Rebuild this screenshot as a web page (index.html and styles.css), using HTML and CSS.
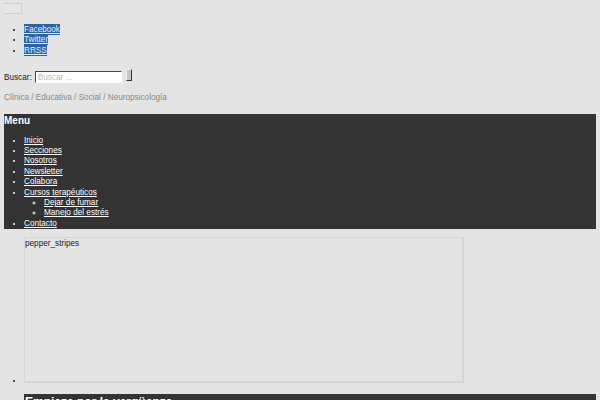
FILE: index.html
```html
<!DOCTYPE html>
<html lang="es">
<head>
<meta charset="utf-8">
<title>Psicología</title>
<link rel="stylesheet" href="styles.css">
</head>
<body>
<button class="toggle" type="button"></button>
<ul class="social">
  <li><a href="#">Facebook</a></li>
  <li><a href="#">Twitter</a></li>
  <li><a href="#">RRSS</a></li>
</ul>
<form class="search">
  <label>Buscar:</label>
  <input class="search-input" type="text" placeholder="Buscar ...">
  <button class="search-btn" type="button"></button>
</form>
<p class="tagline">Clínica / Educativa / Social / Neuropsicología</p>
<nav class="menu">
  <h3 class="menu-title">Menu</h3>
  <ul class="menu-list">
    <li><a href="#">Inicio</a></li>
    <li><a href="#">Secciones</a></li>
    <li><a href="#">Nosotros</a></li>
    <li><a href="#">Newsletter</a></li>
    <li><a href="#">Colabora</a></li>
    <li><a href="#">Cursos terapéuticos</a>
      <ul class="sub">
        <li><a href="#">Dejar de fumar</a></li>
        <li><a href="#">Manejo del estrés</a></li>
      </ul>
    </li>
    <li><a href="#">Contacto</a></li>
  </ul>
</nav>
<ul class="posts">
  <li class="thumb-item"><span class="thumb">pepper_stripes</span></li>
  <li><h2 class="post-title">Empieza por la vergüenza</h2></li>
</ul>
</body>
</html>
```

FILE: styles.css
```css
html { background: #e4e4e4; }
body {
  margin: 3px 4px;
  font-family: "Liberation Sans", Arial, sans-serif;
  font-size: 8.2px;
  line-height: 10.4px;
  color: #222;
  background: #e4e4e4;
}
.toggle {
  display: block;
  width: 19px;
  height: 11px;
  margin-left: -1px;
  padding: 0;
  border: 1px solid #d0d0d0;
  background: #e6e6e6;
}
.social {
  margin: 11px 0 0;
  padding-left: 20px;
  list-style: disc;
}
.social a {
  color: #e8eef6;
  background: #2b62a6;
  text-decoration: underline;
  padding: 1px 0;
}
.search {
  display: flex;
  align-items: flex-start;
  margin: 13px 0 0;
  height: 14px;
}
.search label {
  margin-top: 4px;
  margin-right: 3px;
}
.search-input {
  box-sizing: border-box;
  margin: 2px 0 0;
  width: 87px;
  height: 12px;
  padding: 0 2px;
  border: 1px solid #fff;
  border-top-color: #444;
  border-left-color: #444;
  background: #fff;
  font-family: "Liberation Sans", Arial, sans-serif;
  font-size: 8.2px;
}
.search-input::placeholder { color: #b8b8b8; }
.search-btn {
  box-sizing: border-box;
  margin-left: 4px;
  width: 6px;
  height: 12px;
  padding: 0;
  border: 1px solid #eee;
  border-right-color: #333;
  border-bottom-color: #333;
  background: #c8c8c0;
}
.tagline {
  margin: 10px 0 10px;
  color: #888;
}
.menu {
  background: #333;
  color: #fff;
}
.menu-title {
  margin: 0;
  padding-top: 1px;
  font-size: 10px;
  font-weight: bold;
  line-height: 11px;
}
.menu-list {
  margin: 10px 0 0;
  padding-left: 20px;
}
.menu-list a { color: #fff; text-decoration: underline; }
.menu-list .sub {
  margin: 0;
  padding-left: 20px;
  list-style: circle;
}
.posts {
  margin: 8px 0 0;
  padding-left: 20px;
}
.thumb-item { line-height: 8px; }
.thumb {
  display: inline-block;
  box-sizing: border-box;
  width: 440px;
  height: 146px;
  overflow: hidden;
  border: 2px solid #d6d6d6;
  border-top-width: 1px;
  border-left-width: 1px;
  color: #222;
  vertical-align: baseline;
  line-height: 10px;
  padding-top: 1px;
}
.post-title {
  margin: 9px 0 0;
  background: #333;
  color: #fff;
  font-size: 12px;
  font-weight: bold;
  line-height: 14px;
  padding: 1px 0 0 1px;
}
```
